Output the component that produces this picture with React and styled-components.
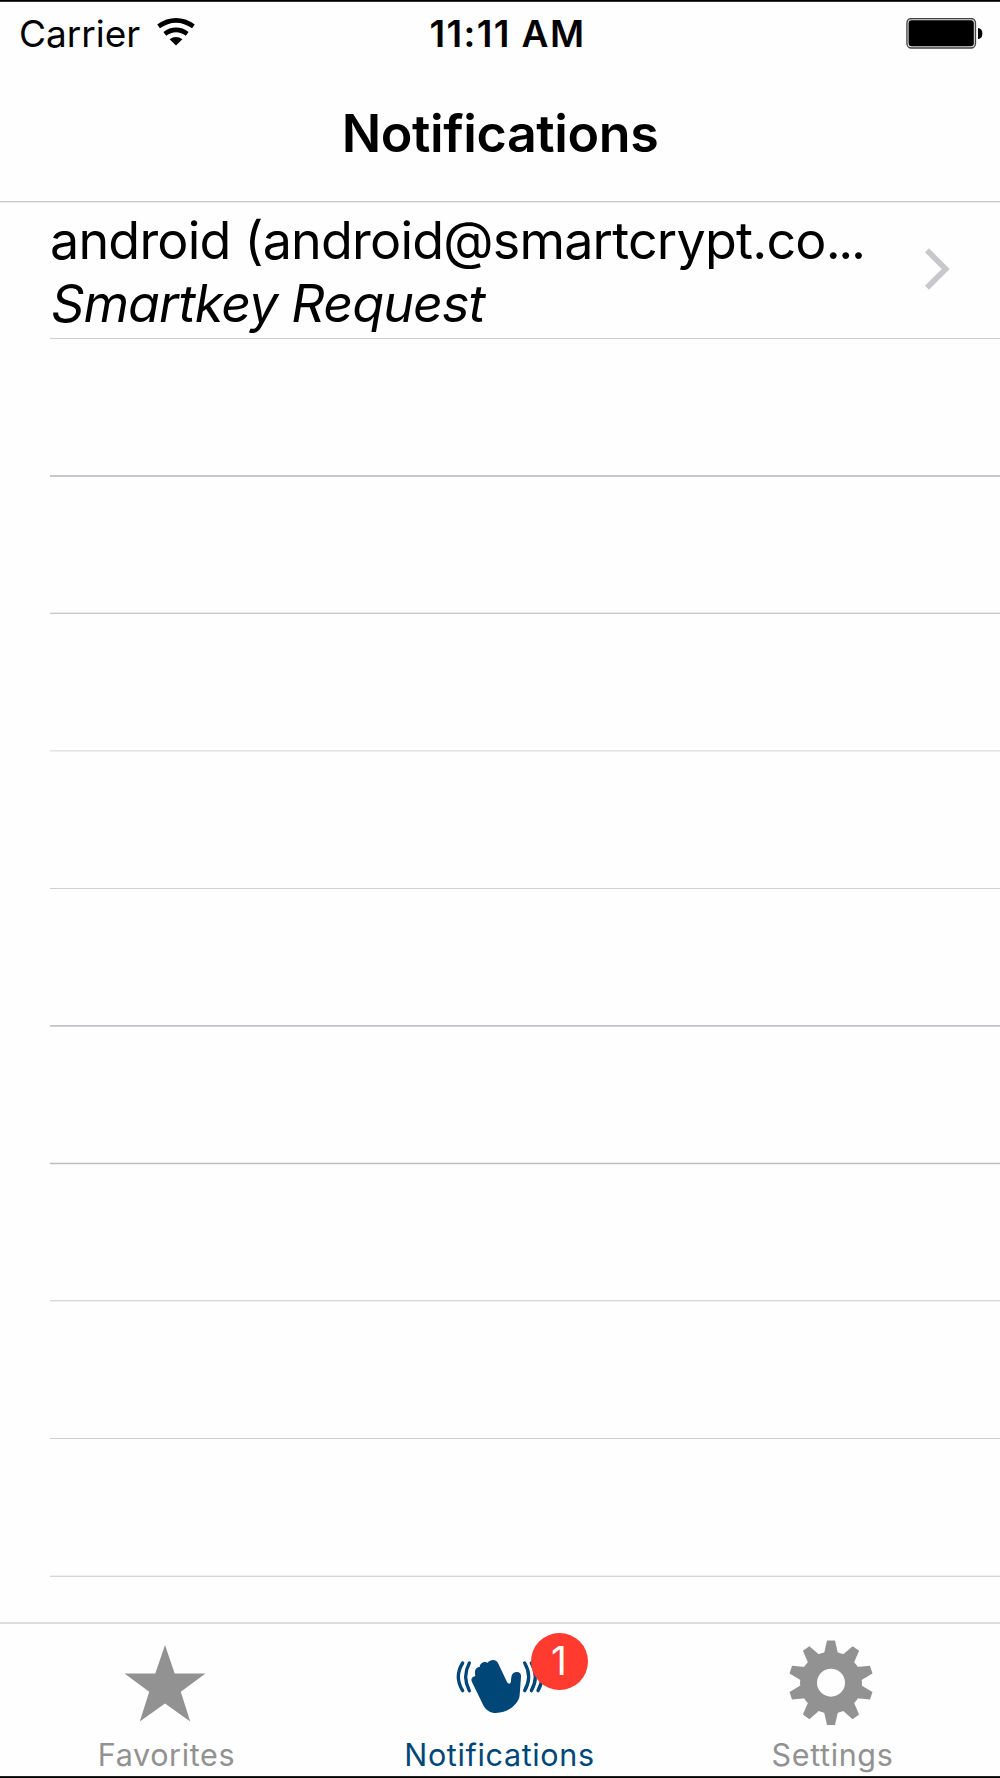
import React from 'react';
import styled, { createGlobalStyle } from 'styled-components';

const colors = {
  ink: '#000',
  line: '#c8c7cc',
  grey: '#929292',
  blue: '#004778',
  red: '#ff3b30',
};

const GlobalStyle = createGlobalStyle`
  body {
    margin: 0;
    background: #fff;
    font-family: Inter, "Liberation Sans", sans-serif;
    color: ${colors.ink};
  }
  * {
    box-sizing: border-box;
  }
`;

const Screen = styled.div`
  width: 1000px;
  height: 1778px;
  padding: 1px 0;
  display: flex;
  flex-direction: column;
  overflow: hidden;
  border-top: 1px solid #000;
  border-bottom: 1px solid #000;
  box-shadow: inset 0 1px #333, inset 0 -1px #222;
  background: #fefefe;
`;

const StatusBar = styled.div`
  height: 62px;
  padding: 2px 17px 0 19px;
  display: grid;
  grid-template-columns: 1fr auto 1fr;
  align-items: center;
`;

const Carrier = styled.div`
  display: flex;
  align-items: center;
  gap: 17px;
  font-size: 37px;
  line-height: 60px;

  svg {
    margin-top: -4px;
  }
`;

const Clock = styled.div`
  padding-left: 13px;
  font-size: 37px;
  font-weight: 600;
  line-height: 60px;
  letter-spacing: 1.4px;
`;

const Battery = styled.svg`
  justify-self: end;
`;

const NavBar = styled.header`
  height: 138px;
  padding-top: 35px;
  border-bottom: 1px solid #c8c8ca;
  box-shadow: 0 1px #ececec;
  text-align: center;
`;

const Title = styled.h1`
  margin: 0;
  font-size: 52px;
  font-weight: 600;
  line-height: 70px;
  letter-spacing: -0.4px;
`;

const List = styled.main`
  flex: 1;
`;

const Row = styled.div`
  height: ${({ $height }) => $height}px;
  margin-left: 50px;
  padding-right: 49px;
  display: flex;
  align-items: center;
  justify-content: space-between;
  border-bottom: 1px solid ${({ $line }) => $line || '#cfcfd3'};
  box-shadow: inset 0 -1px ${({ $above }) => $above || 'transparent'},
    0 1px ${({ $below }) => $below || 'transparent'};

  svg {
    margin-top: -3px;
  }
`;

const Message = styled.div`
  padding-top: 4px;
  font-size: 52px;
  line-height: 63.5px;
  white-space: nowrap;
`;

const Sender = styled.div`
  letter-spacing: -0.78px;
`;

const Dots = styled.span`
  letter-spacing: -2.4px;
`;

const Subject = styled.div`
  padding-left: 1px;
  font-style: italic;
  letter-spacing: -0.9px;
`;

const TabBar = styled.nav`
  height: 154px;
  display: grid;
  grid-template-columns: 331px 335px 331px;
  border-top: 2px solid #dcdcdc;
`;

const Tab = styled.div`
  display: flex;
  flex-direction: column;
  align-items: center;
  color: ${({ $active }) => ($active ? colors.blue : colors.grey)};
`;

const TabIcon = styled.div`
  position: relative;
  height: 111px;
  margin-right: 2px;

  svg {
    display: block;
  }
`;

const TabLabel = styled.span`
  padding-left: 2px;
  font-size: 30.5px;
  line-height: 40px;
  letter-spacing: 0.65px;
`;

const Badge = styled.span`
  position: absolute;
  top: 9px;
  left: 83px;
  width: 57px;
  height: 57px;
  border-radius: 50%;
  background: ${colors.red};
  color: #fff;
  font-size: 39px;
  line-height: 55px;
  text-align: center;
`;

const WifiIcon = () => (
  <svg width="38" height="28" viewBox="0 0 38 28" fill="none" stroke="#000" strokeWidth="4.6">
    <path d="M1.6 8.4Q10 2.4 19 2.4T36.4 8.4" />
    <path d="M7.8 15.9Q13 11.9 19 11.9T30.2 15.9" />
    <path d="M12.6 21.2Q19 16.6 25.4 21.2L19 27.5Z" fill="#000" stroke="none" />
  </svg>
);

const BatteryIcon = () => (
  <Battery width="77" height="32" viewBox="0 .5 77 32">
    <rect x="0.9" y="1" width="68.6" height="29.5" rx="4.5" fill="#ddd" stroke="#444" strokeWidth="1.3" />
    <rect x="2.6" y="2.8" width="65.2" height="25.9" rx="3.2" fill="#000" />
    <path d="M72 10.5Q76.4 11 76.4 16T72 21.5Z" fill="#000" />
  </Battery>
);

const StarIcon = () => (
  <svg width="82" height="110" viewBox="0 1 82 110" fill="currentColor">
    <path d="M41 22L50.7 50.5H81.5L56.8 68.7L66.2 98.5L41 80.5L15.8 98.5L25.2 68.7L.5 50.5H31.3Z" />
  </svg>
);

const WaveIcon = () => (
  <svg width="100" height="110" viewBox="0 0 100 110" fill="none" stroke="currentColor">
    <g transform="translate(-8 16) scale(.3333)">
      <path
        d="M97 128C92 120 93 111 106 108C102 92 108 81 119 81C120 68 134 63 143 68C151 57 169 57 174 69L200 124C204 134 212 133 213 123C214 107 216 96 230 96C241 96 244 103 243 111L239 166C237 190 206 219 168 219C150 219 139 211 131 198Z"
        fill="currentColor"
        stroke="none"
      />
      <g strokeWidth="10" strokeLinecap="round">
        <path d="M68 69Q42 110 68 152" />
        <path d="M88 69Q66 110 88 152" />
        <path d="M254 69Q278 110 254 152" />
        <path d="M274 69Q298 110 274 152" />
        <path d="M294 69Q318 110 294 152" />
      </g>
    </g>
  </svg>
);

const teeth = Array.from({ length: 10 }, (_, i) => i * 36);

const GearIcon = () => (
  <svg width="84" height="110" viewBox="-42 -58.7 84 110" fill="currentColor">
    <circle r="22.5" fill="none" stroke="currentColor" strokeWidth="17" />
    {teeth.map((angle) => (
      <path key={angle} d="M-7 -29L-4 -42.3H4L7 -29Z" transform={`rotate(${angle})`} />
    ))}
  </svg>
);

// rows are 137.5px tall, so the hairline falls between pixels on some of them
const emptyRows = [
  { height: 138, line: colors.line, above: colors.line },
  { height: 137, line: colors.line, above: '#ebebeb' },
  { height: 138, line: '#efefef', above: '#e3e3e4' },
  { height: 137 },
  { height: 138, line: '#d2d2d6', above: '#c4c4c8' },
  { height: 137, line: '#bdbdc0', above: '#ececee', below: '#efeff0' },
  { height: 138, line: '#efeff0', above: '#d8d8d9' },
  { height: 137 },
  { height: 138, line: '#d6d6d8', above: '#f0f0f2' },
];

const App = () => {
  return (
    <>
      <GlobalStyle />
      <Screen>
        <StatusBar>
          <Carrier>Carrier <WifiIcon /></Carrier>
          <Clock>11:11 AM</Clock>
          <BatteryIcon />
        </StatusBar>
        <NavBar>
          <Title>Notifications</Title>
        </NavBar>
        <List>
          <Row $height={137}>
            <Message>
              <Sender>android (android@smartcrypt.co<Dots>...</Dots></Sender>
              <Subject>Smartkey Request</Subject>
            </Message>
            <svg width="26" height="42" viewBox="0 0 26 42" fill="none" stroke="#c7c7cc" strokeWidth="5.6">
              <path d="M2 2.3L20.7 21L2 39.7" />
            </svg>
          </Row>
          {emptyRows.map((row, i) => (
            <Row key={i} $height={row.height} $line={row.line} $above={row.above} $below={row.below} />
          ))}
        </List>
        <TabBar>
          <Tab>
            <TabIcon><StarIcon /></TabIcon>
            <TabLabel>Favorites</TabLabel>
          </Tab>
          <Tab $active>
            <TabIcon>
              <WaveIcon />
              <Badge>1</Badge>
            </TabIcon>
            <TabLabel>Notifications</TabLabel>
          </Tab>
          <Tab>
            <TabIcon><GearIcon /></TabIcon>
            <TabLabel>Settings</TabLabel>
          </Tab>
        </TabBar>
      </Screen>
    </>
  );
};

export default App;
